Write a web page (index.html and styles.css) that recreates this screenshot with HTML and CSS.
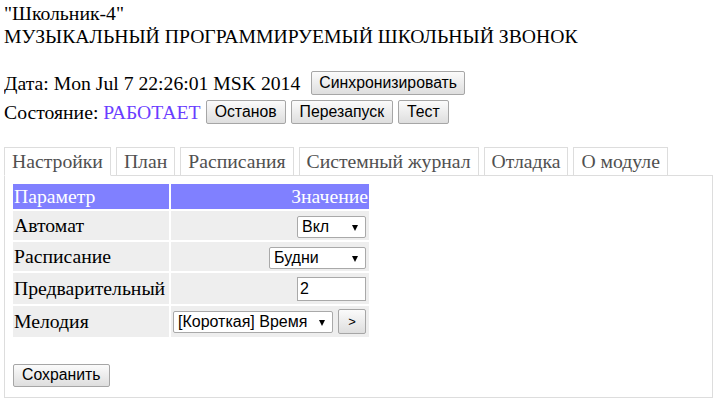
FILE: index.html
```html
<!DOCTYPE html>
<html lang="ru">
<head>
<meta charset="utf-8">
<title>Школьник-4</title>
<link rel="stylesheet" href="styles.css">
</head>
<body>
<div class="title">"Школьник-4"<br>МУЗЫКАЛЬНЫЙ ПРОГРАММИРУЕМЫЙ ШКОЛЬНЫЙ ЗВОНОК</div>
<div class="line line-date"><span class="txt">Дата: Mon Jul 7 22:26:01 MSK 2014</span><button class="btn btn-sync">Синхронизировать</button></div>
<div class="line line-state"><span class="txt">Состояние: <span class="status">РАБОТАЕТ</span></span><button class="btn btn-first">Останов</button><button class="btn">Перезапуск</button><button class="btn">Тест</button></div>
<ul class="tabs">
  <li class="tab active">Настройки</li>
  <li class="tab">План</li>
  <li class="tab">Расписания</li>
  <li class="tab">Системный журнал</li>
  <li class="tab">Отладка</li>
  <li class="tab">О модуле</li>
</ul>
<div class="panel">
  <table class="params">
    <colgroup><col class="col-name"><col class="col-value"></colgroup>
    <tr class="head"><th class="h-name">Параметр</th><th class="h-value">Значение</th></tr>
    <tr class="r-sel"><td class="name">Автомат</td><td class="value"><span class="sel"><select class="w-onoff"><option>Вкл</option><option>Выкл</option></select></span></td></tr>
    <tr class="r-sel"><td class="name">Расписание</td><td class="value"><span class="sel"><select class="w-days"><option>Будни</option></select></span></td></tr>
    <tr class="r-tall"><td class="name">Предварительный</td><td class="value"><input class="num" type="text" value="2"></td></tr>
    <tr class="r-tall"><td class="name">Мелодия</td><td class="value"><span class="sel"><select class="w-melody"><option>[Короткая] Время</option></select></span><button class="btn btn-play">&gt;</button></td></tr>
  </table>
  <div class="actions"><button class="btn btn-save">Сохранить</button></div>
</div>
</body>
</html>
```
FILE: styles.css
```css
html, body { margin: 0; padding: 0; background: #fff; }
body {
  margin: 2px 4px 4px 4px;
  font-family: "Liberation Serif", "Times New Roman", serif;
  font-size: 19.7px;
  color: #000;
}
.title { line-height: 23px; }
.line { display: flex; align-items: center; height: 24px; }
.line-date { margin-top: 23px; gap: 11px; }
.line-state { margin-top: 5px; gap: 5px; }
.btn-first { margin-left: 3px; }
.txt { line-height: 23px; white-space: pre; }
.status { color: #6a3dff; }

.btn {
  font-family: "Liberation Sans", Arial, sans-serif;
  font-size: 15.8px;
  color: #000;
  height: 24px;
  padding: 0 8px;
  margin: 0;
  border: 1px solid #a6a6a6;
  border-radius: 2px;
  background: linear-gradient(#fbfbfb, #dedede);
  box-sizing: border-box;
  line-height: 20px;
}
.btn-sync { padding: 0 7px; }

.tabs {
  list-style: none;
  margin: 23px 0 -1px 0;
  padding: 0;
  display: flex;
  gap: 5px;
}
.tab {
  position: relative;
  border: 1px solid #ddd;
  padding: 2px 7px;
  line-height: 23px;
  color: #505050;
  background: #fff;
}
.tab.active { border-bottom-color: #fff; }

.panel {
  border: 1px solid #ddd;
  margin-right: 4px;
  padding: 8px 8px 10px 8px;
}
.params {
  border-collapse: separate;
  border-spacing: 2px;
  margin: -2px 0 0 -2px;
  table-layout: fixed;
  width: 360px;
}
.col-name { width: 156px; }
.col-value { width: 198px; }
.params th, .params td { padding: 0 1px; vertical-align: middle; line-height: 23px; }
.head th { background: #8080ff; color: #fff; font-weight: normal; height: 25px; }
.h-name { text-align: left; }
.h-value { text-align: right; }
.params td { background: #eee; }
.r-sel td { height: 29px; }
.r-tall td { height: 31px; }
.value { text-align: right; padding-right: 3px !important; }

.sel { position: relative; display: inline-block; vertical-align: middle; }
.sel::after {
  content: "";
  position: absolute;
  right: 8px;
  top: 50%;
  margin-top: -2px;
  border-left: 3.5px solid transparent;
  border-right: 3.5px solid transparent;
  border-top: 6px solid #000;
  pointer-events: none;
}
select {
  -webkit-appearance: none;
  appearance: none;
  display: block;
  height: 22px;
  box-sizing: border-box;
  border: 1px solid #a9a9a9;
  border-radius: 2px;
  background: #fff;
  font-family: "Liberation Sans", Arial, sans-serif;
  font-size: 16px;
  color: #000;
  padding: 0 4px;
  margin: 0;
  text-align: left;
}
.w-onoff { width: 69px; }
.w-days { width: 97px; }
.w-melody { width: 160px; }
.num {
  width: 69px;
  height: 24px;
  box-sizing: border-box;
  border: 1px solid #a9a9a9;
  padding: 0 2px;
  margin: 0;
  font-family: "Liberation Sans", Arial, sans-serif;
  font-size: 16px;
  vertical-align: middle;
}
.btn-play { height: 25px; width: 28px; padding: 0; margin-left: 5px; vertical-align: middle; font-size: 13px; }
.actions { margin-top: 23px; }
.btn-save { height: 23px; }
```
